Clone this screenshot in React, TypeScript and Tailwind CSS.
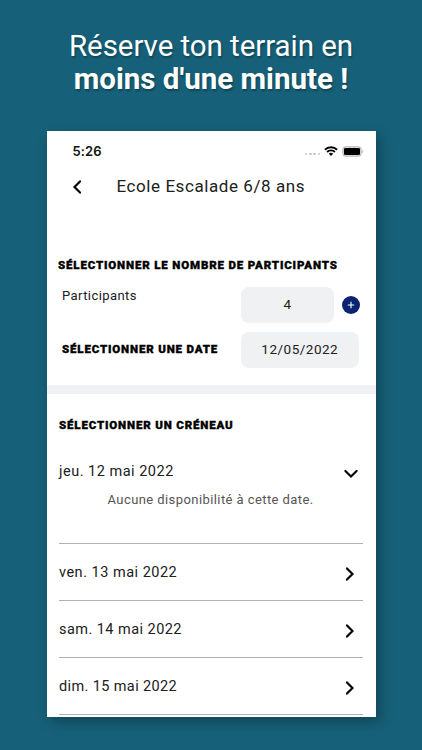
import type { ReactNode } from 'react'

interface ChevronProps {
  className?: string
}

const days = [
  { label: 'ven. 13 mai 2022', spacing: 'tracking-[0.5px]' },
  { label: 'sam. 14 mai 2022', spacing: 'tracking-[0.45px]' },
  { label: 'dim. 15 mai 2022', spacing: 'tracking-[0.38px]' },
]

function Chevron({ className }: ChevronProps) {
  return (
    <svg
      viewBox="0 0 10 16"
      className={`h-4 w-2.5 ${className ?? ''}`}
      fill="none"
      stroke="#080808"
      strokeWidth="2.2"
      strokeLinecap="round"
      strokeLinejoin="miter"
    >
      <path d="M2 2.4 7.5 8 2 13.6" />
    </svg>
  )
}

function SectionTitle({ children, className }: { children: ReactNode; className: string }) {
  return (
    <h2
      className={`whitespace-nowrap text-[11.5px] leading-4 font-black text-black uppercase [-webkit-text-stroke:0.35px_#000] ${className}`}
    >
      {children}
    </h2>
  )
}

function StatusBar() {
  return (
    <div className="flex h-5 items-center justify-between pr-3 pl-[26px]">
      <span className="mt-px font-[Inter] text-[13px] font-semibold tracking-[0.1px] text-[#111]">5:26</span>
      <div className="flex items-center">
        <div className="mt-1.5 mr-1 flex gap-[1.7px]">
          <i className="size-[2.5px] rounded-full bg-[#c4c4c4]" />
          <i className="size-[2.5px] rounded-full bg-[#c4c4c4]" />
          <i className="size-[2.5px] rounded-full bg-[#c4c4c4]" />
          <i className="size-[2.5px] rounded-full bg-[#c4c4c4]" />
        </div>
        <svg viewBox="0 0 14 10" className="mr-1 h-2.5 w-3.5" fill="none" stroke="#000" strokeWidth="1.9">
          <path d="M.9 3.7a8.7 8.7 0 0 1 12.2 0M3.1 6a5.6 5.6 0 0 1 7.8 0" />
          <path d="M4.9 7.8a3 3 0 0 1 4.2 0L7 9.9z" fill="#000" stroke="none" />
        </svg>
        <svg viewBox="0 0 22 11" className="h-[11px] w-[22px]">
          <rect x=".8" y=".8" width="18.4" height="9.4" rx="2.6" fill="#ddd" stroke="#b5b5b5" />
          <rect x="2" y="2" width="16" height="7" rx="1.2" fill="#000" />
          <path d="M20.3 3.8c1.3.5 1.3 2.9 0 3.4z" fill="#b5b5b5" />
        </svg>
      </div>
    </div>
  )
}

export default function App() {
  return (
    <main className="h-[750px] w-[422px] overflow-hidden bg-[#166179] font-[Roboto,sans-serif]">
      <h1 className="h-[130.5px] pt-[30px] text-center text-[29.5px] leading-[33px] font-normal text-white [text-shadow:1px_2px_2px_rgba(0,0,0,0.3)]">
        <span className="block tracking-[-0.05px]">Réserve ton terrain en</span>
        <span className="block font-bold">moins d'une minute !</span>
      </h1>

      <section className="ml-[46.5px] h-[586.5px] w-[329.5px] overflow-hidden bg-white pt-[10.5px] text-[#202020] shadow-[4px_5px_12px_rgba(0,0,0,0.3)]">
        <StatusBar />

        <header className="mt-4 flex h-5 items-center pl-[25px]">
          <Chevron className="rotate-180" />
          <span className="ml-[35px] text-[17px] tracking-[0.57px] whitespace-nowrap">Ecole Escalade 6/8 ans</span>
        </header>

        <SectionTitle className="mt-[60px] ml-[11.5px] tracking-[0.84px]">
          Sélectionner le nombre de participants
        </SectionTitle>

        <div className="mt-[13.5px] flex h-9 pl-[15.5px]">
          <span className="w-[178.5px] text-[13px] leading-[18px] tracking-[0.42px]">Participants</span>
          <div className="flex w-[93.5px] items-center justify-center rounded-lg bg-[#f0f1f3] text-[13.5px]">4</div>
          <button className="mt-[9px] ml-2 flex size-[18px] items-center justify-center rounded-full bg-[#0a2472]">
            <svg viewBox="0 0 8 8" className="size-2" stroke="#fff" strokeWidth="1.1">
              <path d="M4 .8v6.4M.8 4h6.4" />
            </svg>
          </button>
        </div>

        <div className="mt-[9px] flex h-9 items-center pl-[15.5px]">
          <SectionTitle className="mb-px w-[178.5px] tracking-[0.84px]">Sélectionner une date</SectionTitle>
          <div className="flex h-9 w-[118.5px] items-center justify-center rounded-lg bg-[#f0f1f3] text-[13.5px] tracking-[0.5px]">
            12/05/2022
          </div>
        </div>

        <div className="mt-[17px] h-[9px] bg-[#f0f1f4]" />

        <div className="mr-[13px] ml-3">
          <SectionTitle className="mt-[23px] ml-[0.5px] tracking-[0.84px]">Sélectionner un créneau</SectionTitle>

          <div className="mt-[28px] flex h-5 items-center justify-between pr-[7px]">
            <span className="mt-[3px] ml-[0.5px] text-[14.5px] tracking-[0.5px]">jeu. 12 mai 2022</span>
            <Chevron className="mt-1.5 rotate-90" />
          </div>
          <p className="mt-[9px] h-[54.5px] border-b border-[#b0b0b0] pl-[49px] text-[13px] leading-5 tracking-[0.42px] whitespace-nowrap text-[#555]">
            Aucune disponibilité à cette date.
          </p>

          {days.map(({ label, spacing }) => (
            <div key={label} className="flex h-[57px] items-center justify-between border-b border-[#b0b0b0] pr-2">
              <span className={`mt-px ml-[0.5px] text-[14.5px] ${spacing}`}>{label}</span>
              <Chevron className="mt-1" />
            </div>
          ))}
        </div>
      </section>
    </main>
  )
}
